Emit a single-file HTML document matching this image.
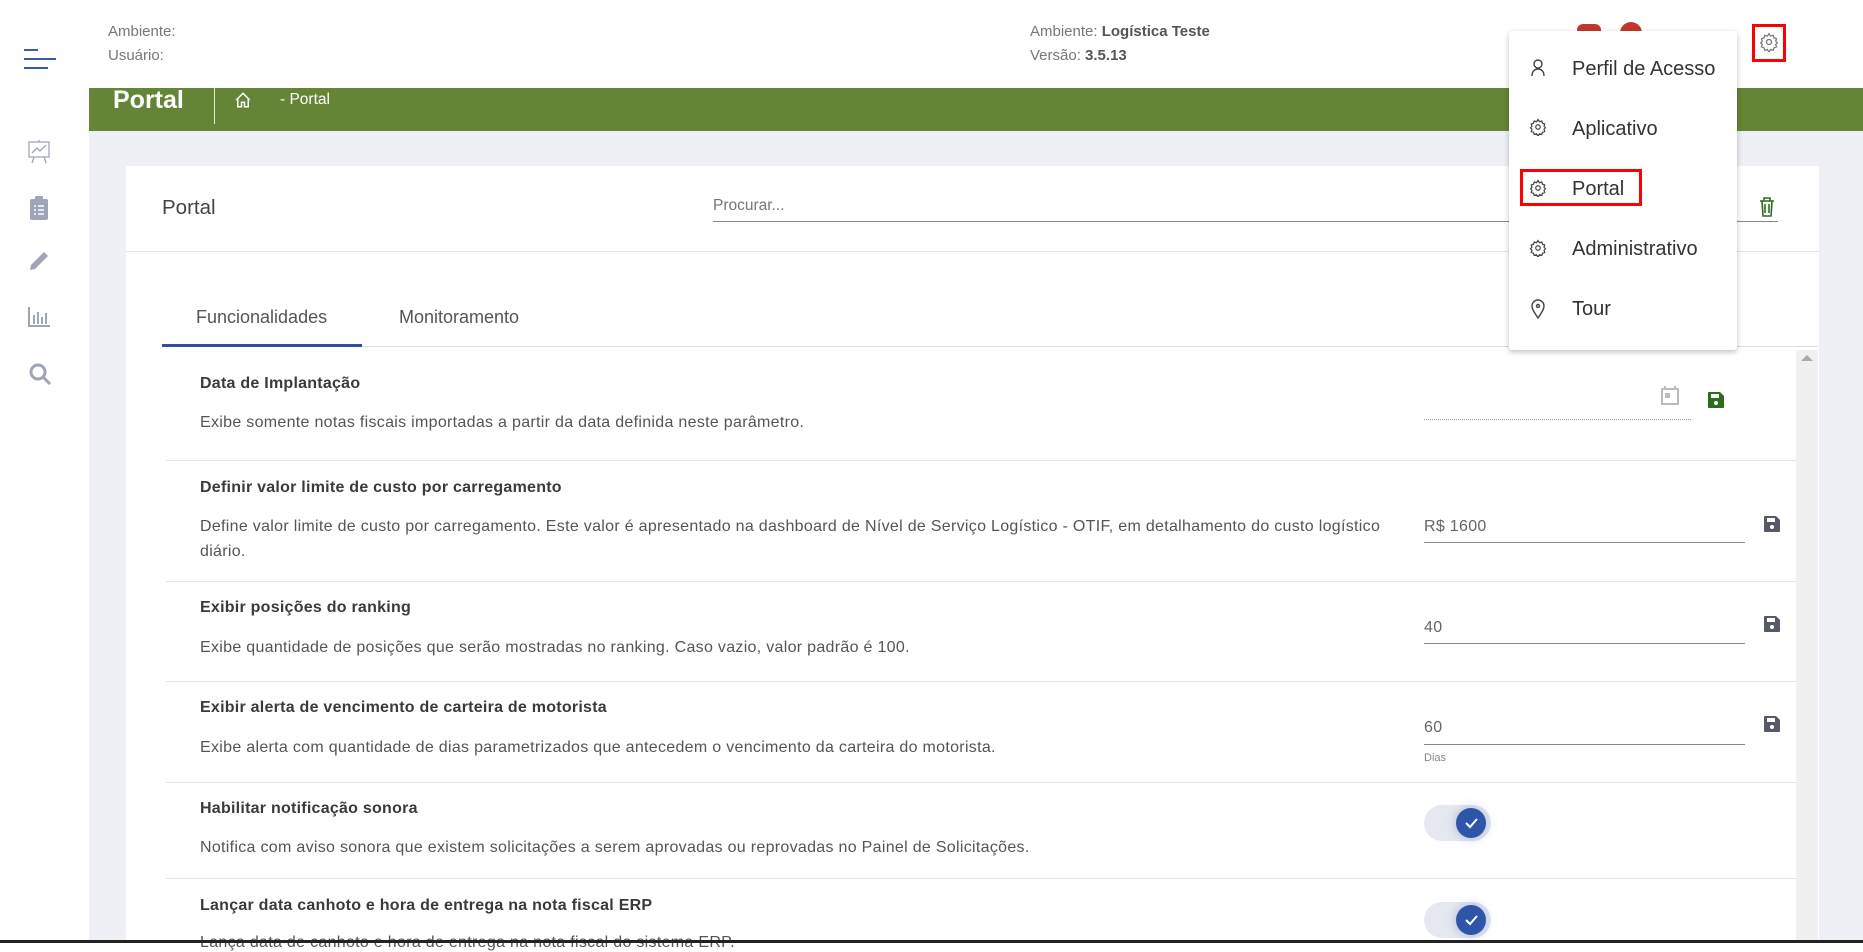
<!DOCTYPE html>
<html><head><meta charset="utf-8"><style>
*{margin:0;padding:0;box-sizing:border-box}
body{width:1863px;height:943px;overflow:hidden;background:#fff;font-family:"Liberation Sans",sans-serif;position:relative;color:#333}
.a{position:absolute;white-space:nowrap}
.t{font-size:16px;letter-spacing:.25px;font-weight:bold;color:#3a3a3a}
.d{font-size:16px;letter-spacing:.3px;color:#555}
.sep{position:absolute;left:166px;width:1630px;height:1px;background:#e4e4e4}
.ul{position:absolute;left:1424px;width:321px;height:1px;background:#888}
.mi{position:absolute;left:1572px;font-size:20px;color:#333}
</style></head><body>
<div class="a" style="left:24px;top:49px;width:14px;height:2px;background:#3a5bb0"></div>
<div class="a" style="left:24px;top:58px;width:32px;height:2px;background:#3a5bb0"></div>
<div class="a" style="left:24px;top:67px;width:24px;height:2px;background:#3a5bb0"></div>
<div class="a" style="left:108px;top:23px;font-size:15px;color:#777">Ambiente:</div>
<div class="a" style="left:108px;top:47px;font-size:15px;color:#777">Usuário:</div>
<div class="a" style="left:1030px;top:23px;font-size:15px;color:#777">Ambiente: <b style="color:#555">Logística Teste</b></div>
<div class="a" style="left:1030px;top:47px;font-size:15px;color:#777">Versão: <b style="color:#555">3.5.13</b></div>
<div class="a" style="left:1577px;top:24px;width:24px;height:12px;background:#c0392b;border-radius:6px 6px 0 0"></div>
<div class="a" style="left:1620px;top:22px;width:22px;height:12px;background:#c0392b;border-radius:11px 11px 0 0"></div>
<div class="a" style="left:1752px;top:24px;width:34px;height:38px;border:3px solid #f00"></div>
<svg class="a" style="left:1759px;top:32px" width="20" height="20" viewBox="0 0 24 24" fill="none" stroke="#777" stroke-width="1.5"><circle cx="12" cy="12" r="3"/><path d="M12 2l2 3 3-1 1 3 3 1-1 3 2 2-2 2 1 3-3 1-1 3-3-1-2 3-2-3-3 1-1-3-3-1 1-3-2-2 2-2-1-3 3-1 1-3 3 1z"/></svg>
<div class="a" style="left:89px;top:88px;width:1774px;height:855px;background:#eef0f5"></div>
<div class="a" style="left:89px;top:88px;width:1774px;height:43px;background:#648535"></div>
<div class="a" style="left:113px;top:86px;font-size:25px;font-weight:bold;color:#fff">Portal</div>
<div class="a" style="left:214px;top:88px;width:1px;height:36px;background:#dfe8d0"></div>
<svg class="a" style="left:234px;top:91px" width="18" height="18" viewBox="0 0 24 24" fill="none" stroke="#fff" stroke-width="2"><path d="M3 12L12 3l9 9M5 10v11h5v-6h4v6h5V10"/></svg>
<div class="a" style="left:280px;top:91px;font-size:15.5px;color:#fff">- Portal</div>
<svg class="a" style="left:28px;top:140px" width="22" height="24" viewBox="0 0 22 24" fill="none" stroke="#a0a4b8" stroke-width="1.3"><rect x="1" y="2" width="20" height="15"/><path d="M4 13l5-5 3 3 6-6M6 17l-2 6M16 17l2 6M11 0v2"/></svg>
<svg class="a" style="left:30px;top:196px" width="18" height="24" viewBox="0 0 18 24"><rect x="0" y="3" width="18" height="21" rx="2" fill="#a0a4b8"/><rect x="5" y="0" width="8" height="5" rx="1" fill="#a0a4b8"/><path d="M4 10h2M8 10h6M4 14h2M8 14h6M4 18h2M8 18h6" stroke="#fff" stroke-width="1.5"/></svg>
<svg class="a" style="left:28px;top:250px" width="22" height="22" viewBox="0 0 22 22"><path d="M2 20l1-5L16 2l4 4L7 19z" fill="#a0a4b8"/></svg>
<svg class="a" style="left:28px;top:307px" width="22" height="20" viewBox="0 0 22 20" stroke="#a0a4b8" stroke-width="2" fill="none"><path d="M1 0v19h21M6 8v9M10 5v12M14 10v7M18 6v11"/></svg>
<svg class="a" style="left:28px;top:362px" width="24" height="24" viewBox="0 0 24 24" fill="none" stroke="#a0a4b8" stroke-width="3"><circle cx="10" cy="10" r="7"/><path d="M15 15l7 7"/></svg>
<div class="a" style="left:126px;top:166px;width:1693px;height:777px;background:#fff"></div>
<div class="a" style="left:162px;top:196px;font-size:20.5px;color:#444">Portal</div>
<div class="a" style="left:713px;top:197px;font-size:15.5px;color:#777">Procurar...</div>
<div class="a" style="left:713px;top:221px;width:1065px;height:1px;background:#888"></div>
<svg class="a" style="left:1759px;top:197px" width="16" height="20" viewBox="0 0 16 20" fill="none" stroke="#2e6b1f" stroke-width="1.6"><path d="M1 4h14M5 4V1h6v3M3 4l1 15h8l1-15M6 7v9M10 7v9"/></svg>
<div class="a" style="left:126px;top:251px;width:1693px;height:1px;background:#e6e6e6"></div>
<div class="a" style="left:196px;top:307px;font-size:18px;color:#555">Funcionalidades</div>
<div class="a" style="left:399px;top:307px;font-size:18px;color:#555">Monitoramento</div>
<div class="a" style="left:162px;top:346px;width:1656px;height:1px;background:#ddd"></div>
<div class="a" style="left:162px;top:344px;width:200px;height:3px;background:#2f4fa0"></div>
<div class="a" style="left:1796px;top:350px;width:22px;height:593px;background:#f0f0f0"></div>
<div class="a" style="left:1801px;top:355px;width:0;height:0;border-left:6px solid transparent;border-right:6px solid transparent;border-bottom:6px solid #aaa"></div>
<div class="a t" style="left:200px;top:375px">Data de Implantação</div>
<div class="a d" style="left:200px;top:414px">Exibe somente notas fiscais importadas a partir da data definida neste parâmetro.</div>
<div class="a" style="left:1424px;top:419px;width:267px;border-top:1px dotted #999"></div>
<svg class="a" style="left:1661px;top:386px" width="18" height="19" viewBox="0 0 18 19" fill="none" stroke="#bbb" stroke-width="2"><rect x="1" y="3" width="16" height="15"/><path d="M4 0v3M14 0v3"/><rect x="5" y="8" width="3" height="3" fill="#bbb"/></svg>
<svg class="a" style="left:1708px;top:392px" width="16" height="16" viewBox="0 0 16 16"><path d="M0 1a1 1 0 011-1h11l4 4v11a1 1 0 01-1 1H1a1 1 0 01-1-1z" fill="#2e6b1f"/><rect x="3" y="2" width="8" height="4" fill="#fff"/><circle cx="8" cy="11" r="2" fill="#fff"/></svg>
<div class="sep" style="top:460px"></div>
<div class="a t" style="left:200px;top:479px">Definir valor limite de custo por carregamento</div>
<div class="a d" style="left:200px;top:518px">Define valor limite de custo por carregamento. Este valor é apresentado na dashboard de Nível de Serviço Logístico - OTIF, em detalhamento do custo logístico</div>
<div class="a d" style="left:200px;top:543px">diário.</div>
<div class="a d" style="left:1424px;top:518px;color:#666">R$ 1600</div>
<div class="ul" style="top:542px"></div>
<svg class="a" style="left:1764px;top:516px" width="16" height="16" viewBox="0 0 16 16"><path d="M0 1a1 1 0 011-1h11l4 4v11a1 1 0 01-1 1H1a1 1 0 01-1-1z" fill="#555a66"/><rect x="3" y="2" width="8" height="4" fill="#fff"/><circle cx="8" cy="11" r="2" fill="#fff"/></svg>
<div class="sep" style="top:581px"></div>
<div class="a t" style="left:200px;top:599px">Exibir posições do ranking</div>
<div class="a d" style="left:200px;top:639px">Exibe quantidade de posições que serão mostradas no ranking. Caso vazio, valor padrão é 100.</div>
<div class="a d" style="left:1424px;top:619px;color:#666">40</div>
<div class="ul" style="top:643px"></div>
<svg class="a" style="left:1764px;top:616px" width="16" height="16" viewBox="0 0 16 16"><path d="M0 1a1 1 0 011-1h11l4 4v11a1 1 0 01-1 1H1a1 1 0 01-1-1z" fill="#555a66"/><rect x="3" y="2" width="8" height="4" fill="#fff"/><circle cx="8" cy="11" r="2" fill="#fff"/></svg>
<div class="sep" style="top:681px"></div>
<div class="a t" style="left:200px;top:699px">Exibir alerta de vencimento de carteira de motorista</div>
<div class="a d" style="left:200px;top:739px">Exibe alerta com quantidade de dias parametrizados que antecedem o vencimento da carteira do motorista.</div>
<div class="a d" style="left:1424px;top:719px;color:#666">60</div>
<div class="ul" style="top:744px"></div>
<div class="a" style="left:1424px;top:752px;font-size:11px;color:#888">Dias</div>
<svg class="a" style="left:1764px;top:716px" width="16" height="16" viewBox="0 0 16 16"><path d="M0 1a1 1 0 011-1h11l4 4v11a1 1 0 01-1 1H1a1 1 0 01-1-1z" fill="#555a66"/><rect x="3" y="2" width="8" height="4" fill="#fff"/><circle cx="8" cy="11" r="2" fill="#fff"/></svg>
<div class="sep" style="top:782px"></div>
<div class="a t" style="left:200px;top:800px">Habilitar notificação sonora</div>
<div class="a d" style="left:200px;top:839px">Notifica com aviso sonora que existem solicitações a serem aprovadas ou reprovadas no Painel de Solicitações.</div>
<div class="a" style="left:1424px;top:805px;width:67px;height:36px;border-radius:18px;background:#e6e8ef"></div>
<div class="a" style="left:1456px;top:808px;width:30px;height:30px;border-radius:50%;background:#2f55a8;box-shadow:0 0 10px rgba(47,85,168,.35)"><svg width="30" height="30" viewBox="0 0 30 30" fill="none" stroke="#fff" stroke-width="2"><path d="M10 15l4 4 7-8"/></svg></div>
<div class="sep" style="top:878px"></div>
<div class="a t" style="left:200px;top:897px">Lançar data canhoto e hora de entrega na nota fiscal ERP</div>
<div class="a d" style="left:200px;top:934px;color:#555">Lança data de canhoto e hora de entrega na nota fiscal do sistema ERP.</div>
<div class="a" style="left:1424px;top:902px;width:67px;height:36px;border-radius:18px;background:#e6e8ef"></div>
<div class="a" style="left:1456px;top:905px;width:30px;height:30px;border-radius:50%;background:#2f55a8;box-shadow:0 0 10px rgba(47,85,168,.35)"><svg width="30" height="30" viewBox="0 0 30 30" fill="none" stroke="#fff" stroke-width="2"><path d="M10 15l4 4 7-8"/></svg></div>
<div class="a" style="left:0;top:940px;width:1863px;height:3px;background:#222"></div>
<div class="a" style="left:1509px;top:31px;width:228px;height:319px;background:#fff;box-shadow:0 2px 6px rgba(0,0,0,.25);border-radius:3px"></div>
<svg class="a" style="left:1530px;top:59px" width="16" height="18" viewBox="0 0 16 18" fill="none" stroke="#444" stroke-width="1.4"><circle cx="8" cy="5" r="4"/><path d="M2 17c0-5 3-7 6-7s6 2 6 7"/></svg>
<div class="mi" style="top:58px">Perfil de Acesso</div>
<svg class="a" style="left:1529px;top:118px" width="18" height="18" viewBox="0 0 24 24" fill="none" stroke="#444" stroke-width="1.6"><circle cx="12" cy="12" r="3"/><path d="M12 2l2 3 3-1 1 3 3 1-1 3 2 2-2 2 1 3-3 1-1 3-3-1-2 3-2-3-3 1-1-3-3-1 1-3-2-2 2-2-1-3 3-1 1-3 3 1z"/></svg>
<div class="mi" style="top:118px">Aplicativo</div>
<div class="a" style="left:1520px;top:169px;width:122px;height:37px;border:3px solid #f00"></div>
<svg class="a" style="left:1529px;top:179px" width="18" height="18" viewBox="0 0 24 24" fill="none" stroke="#444" stroke-width="1.6"><circle cx="12" cy="12" r="3"/><path d="M12 2l2 3 3-1 1 3 3 1-1 3 2 2-2 2 1 3-3 1-1 3-3-1-2 3-2-3-3 1-1-3-3-1 1-3-2-2 2-2-1-3 3-1 1-3 3 1z"/></svg>
<div class="mi" style="top:178px">Portal</div>
<svg class="a" style="left:1529px;top:239px" width="18" height="18" viewBox="0 0 24 24" fill="none" stroke="#444" stroke-width="1.6"><circle cx="12" cy="12" r="3"/><path d="M12 2l2 3 3-1 1 3 3 1-1 3 2 2-2 2 1 3-3 1-1 3-3-1-2 3-2-3-3 1-1-3-3-1 1-3-2-2 2-2-1-3 3-1 1-3 3 1z"/></svg>
<div class="mi" style="top:238px">Administrativo</div>
<svg class="a" style="left:1531px;top:299px" width="14" height="20" viewBox="0 0 14 20" fill="none" stroke="#444" stroke-width="1.4"><path d="M7 19C3 13 1 10 1 7a6 6 0 0112 0c0 3-2 6-6 12z"/><circle cx="7" cy="7" r="1.5"/></svg>
<div class="mi" style="top:298px">Tour</div>
</body></html>
